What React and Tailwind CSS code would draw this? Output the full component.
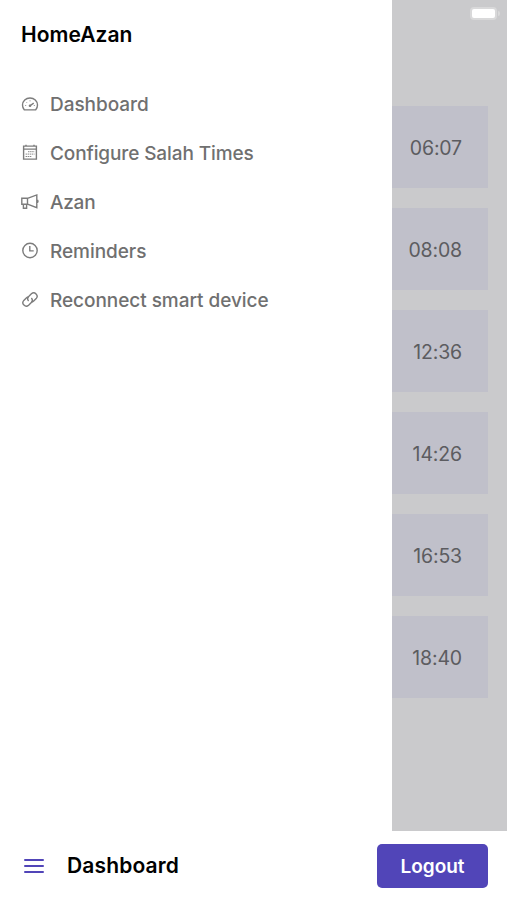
import React from 'react';

const Icon = ({ children }) => (
  <svg className="w-[18px] h-[18px] shrink-0 -translate-y-[1.5px] text-[#7c7c7c]" viewBox="0 0 18 18" fill="none" stroke="currentColor" strokeWidth="1.4">
    {children}
  </svg>
);

const GaugeIcon = () => (
  <Icon>
    <path d="M3.4 15.4C2 14.1 1.5 12.7 1.5 10.6a7.5 7.1 0 0 1 15 0c0 2.1-.5 3.5-1.9 4.8z" strokeLinejoin="round" />
    <path d="M9 11.3l3.7-2.7" />
    <circle cx="9" cy="11.3" r="1.3" fill="currentColor" stroke="none" />
    <path d="M9 5.7v1.2M4 11h1.2M5.3 7.6l.8.8M12.8 11h1.2" strokeWidth=".7" />
  </Icon>
);

const CalendarIcon = () => (
  <Icon>
    <path d="M2.6 2.6h12.8v13H2.6zM2.6 5.6h12.8M5 1.2v2M13 1.2v2" />
    <path d="M7 8.2h6.5M4.6 10.6h8.9M4.6 13h6" strokeWidth=".9" strokeDasharray="1.5 .6" />
  </Icon>
);

const MegaphoneIcon = () => (
  <Icon>
    <path d="M6.5 5.8L15.8 2.4v12.8l-9.3-3.5M.8 5.8h5.7v5.9H.8zM2.4 11.7v4h3.2v-4M15.8 7.3c1.6.2 1.6 2.7 0 2.9" />
  </Icon>
);

const ClockIcon = () => (
  <Icon>
    <circle cx="9" cy="9" r="7.2" />
    <path d="M8.8 4.4v5h3.9" />
  </Icon>
);

const LinkIcon = () => (
  <Icon>
    <path d="M7.6 10.5a3.4 3.4 0 0 1 .3-4.7l2.5-2.5a3.4 3.4 0 0 1 4.8 4.8l-2.5 2.5a3.4 3.4 0 0 1-2.6 1" />
    <path d="M10.4 7.5a3.4 3.4 0 0 1-.3 4.7l-2.5 2.5a3.4 3.4 0 0 1-4.8-4.8l2.5-2.5a3.4 3.4 0 0 1 2.6-1" />
  </Icon>
);

const links = [
  { label: 'Dashboard', icon: GaugeIcon, tracking: 'tracking-[-0.05px]' },
  { label: 'Configure Salah Times', icon: CalendarIcon, tracking: 'tracking-[-0.11px]' },
  { label: 'Azan', icon: MegaphoneIcon, tracking: 'tracking-[-0.25px]' },
  { label: 'Reminders', icon: ClockIcon, tracking: 'tracking-[-0.05px]' },
  { label: 'Reconnect smart device', icon: LinkIcon, tracking: 'tracking-[-0.05px]' },
];

const times = ['06:07', '08:08', '12:36', '14:26', '16:53', '18:40'];

const Sidebar = () => (
  <aside className="w-[392px] shrink-0 bg-white pl-[21px] pt-5">
    <h1 className="text-[21px] leading-[30px] font-semibold tracking-[0.03px] text-black">HomeAzan</h1>
    <nav className="mt-[30px]">
      {links.map(({ label, icon: LinkGlyph, tracking }) => (
        <a key={label} href="#" className="flex h-[49px] items-center gap-[11px] text-[#707070]">
          <LinkGlyph />
          <span className={`pt-px text-[19px] font-medium whitespace-nowrap ${tracking}`}>{label}</span>
        </a>
      ))}
    </nav>
  </aside>
);

const Battery = () => (
  <div className="flex items-center gap-px">
    <div className="h-[13px] w-[27px] rounded-[4px] bg-[#d9d9da] p-[2px]">
      <div className="h-full w-full rounded-[2px] bg-white" />
    </div>
    <div className="h-[5px] w-[2px] rounded-r bg-[#d9d9da]" />
  </div>
);

const TimesPanel = () => (
  <main className="flex-1 bg-[#cacacc]">
    <div className="flex h-[106px] items-start justify-end pt-[7px] pr-[7px]">
      <Battery />
    </div>
    <div className="flex flex-col gap-5 pr-[19px]">
      {times.map((time) => (
        <div key={time} className="flex h-[82px] items-center justify-end bg-[#c0c0ca] pt-[3px] pr-[26px] text-[19.5px] tracking-[-0.15px] text-[#5c5c60]">
          {time}
        </div>
      ))}
    </div>
  </main>
);

const BottomBar = () => (
  <footer className="flex h-[69px] items-center bg-white pr-[19px] pl-6">
    <button aria-label="Menu" className="flex w-5 flex-col gap-1">
      <span className="h-[2px] rounded bg-[#5145b8]" />
      <span className="h-[2px] rounded bg-[#5145b8]" />
      <span className="h-[2px] rounded bg-[#5145b8]" />
    </button>
    <h2 className="ml-[23px] text-[21px] font-semibold tracking-[0.15px] text-black">Dashboard</h2>
    <button className="ml-auto h-11 w-[111px] rounded-[5px] bg-[#5145b8] pt-[3px] text-[19px] font-semibold text-white">
      Logout
    </button>
  </footer>
);

export default function App() {
  return (
    <div className="flex h-screen flex-col overflow-hidden bg-white font-['Inter',sans-serif]">
      <div className="flex h-[831px] shrink-0">
        <Sidebar />
        <TimesPanel />
      </div>
      <BottomBar />
    </div>
  );
}
